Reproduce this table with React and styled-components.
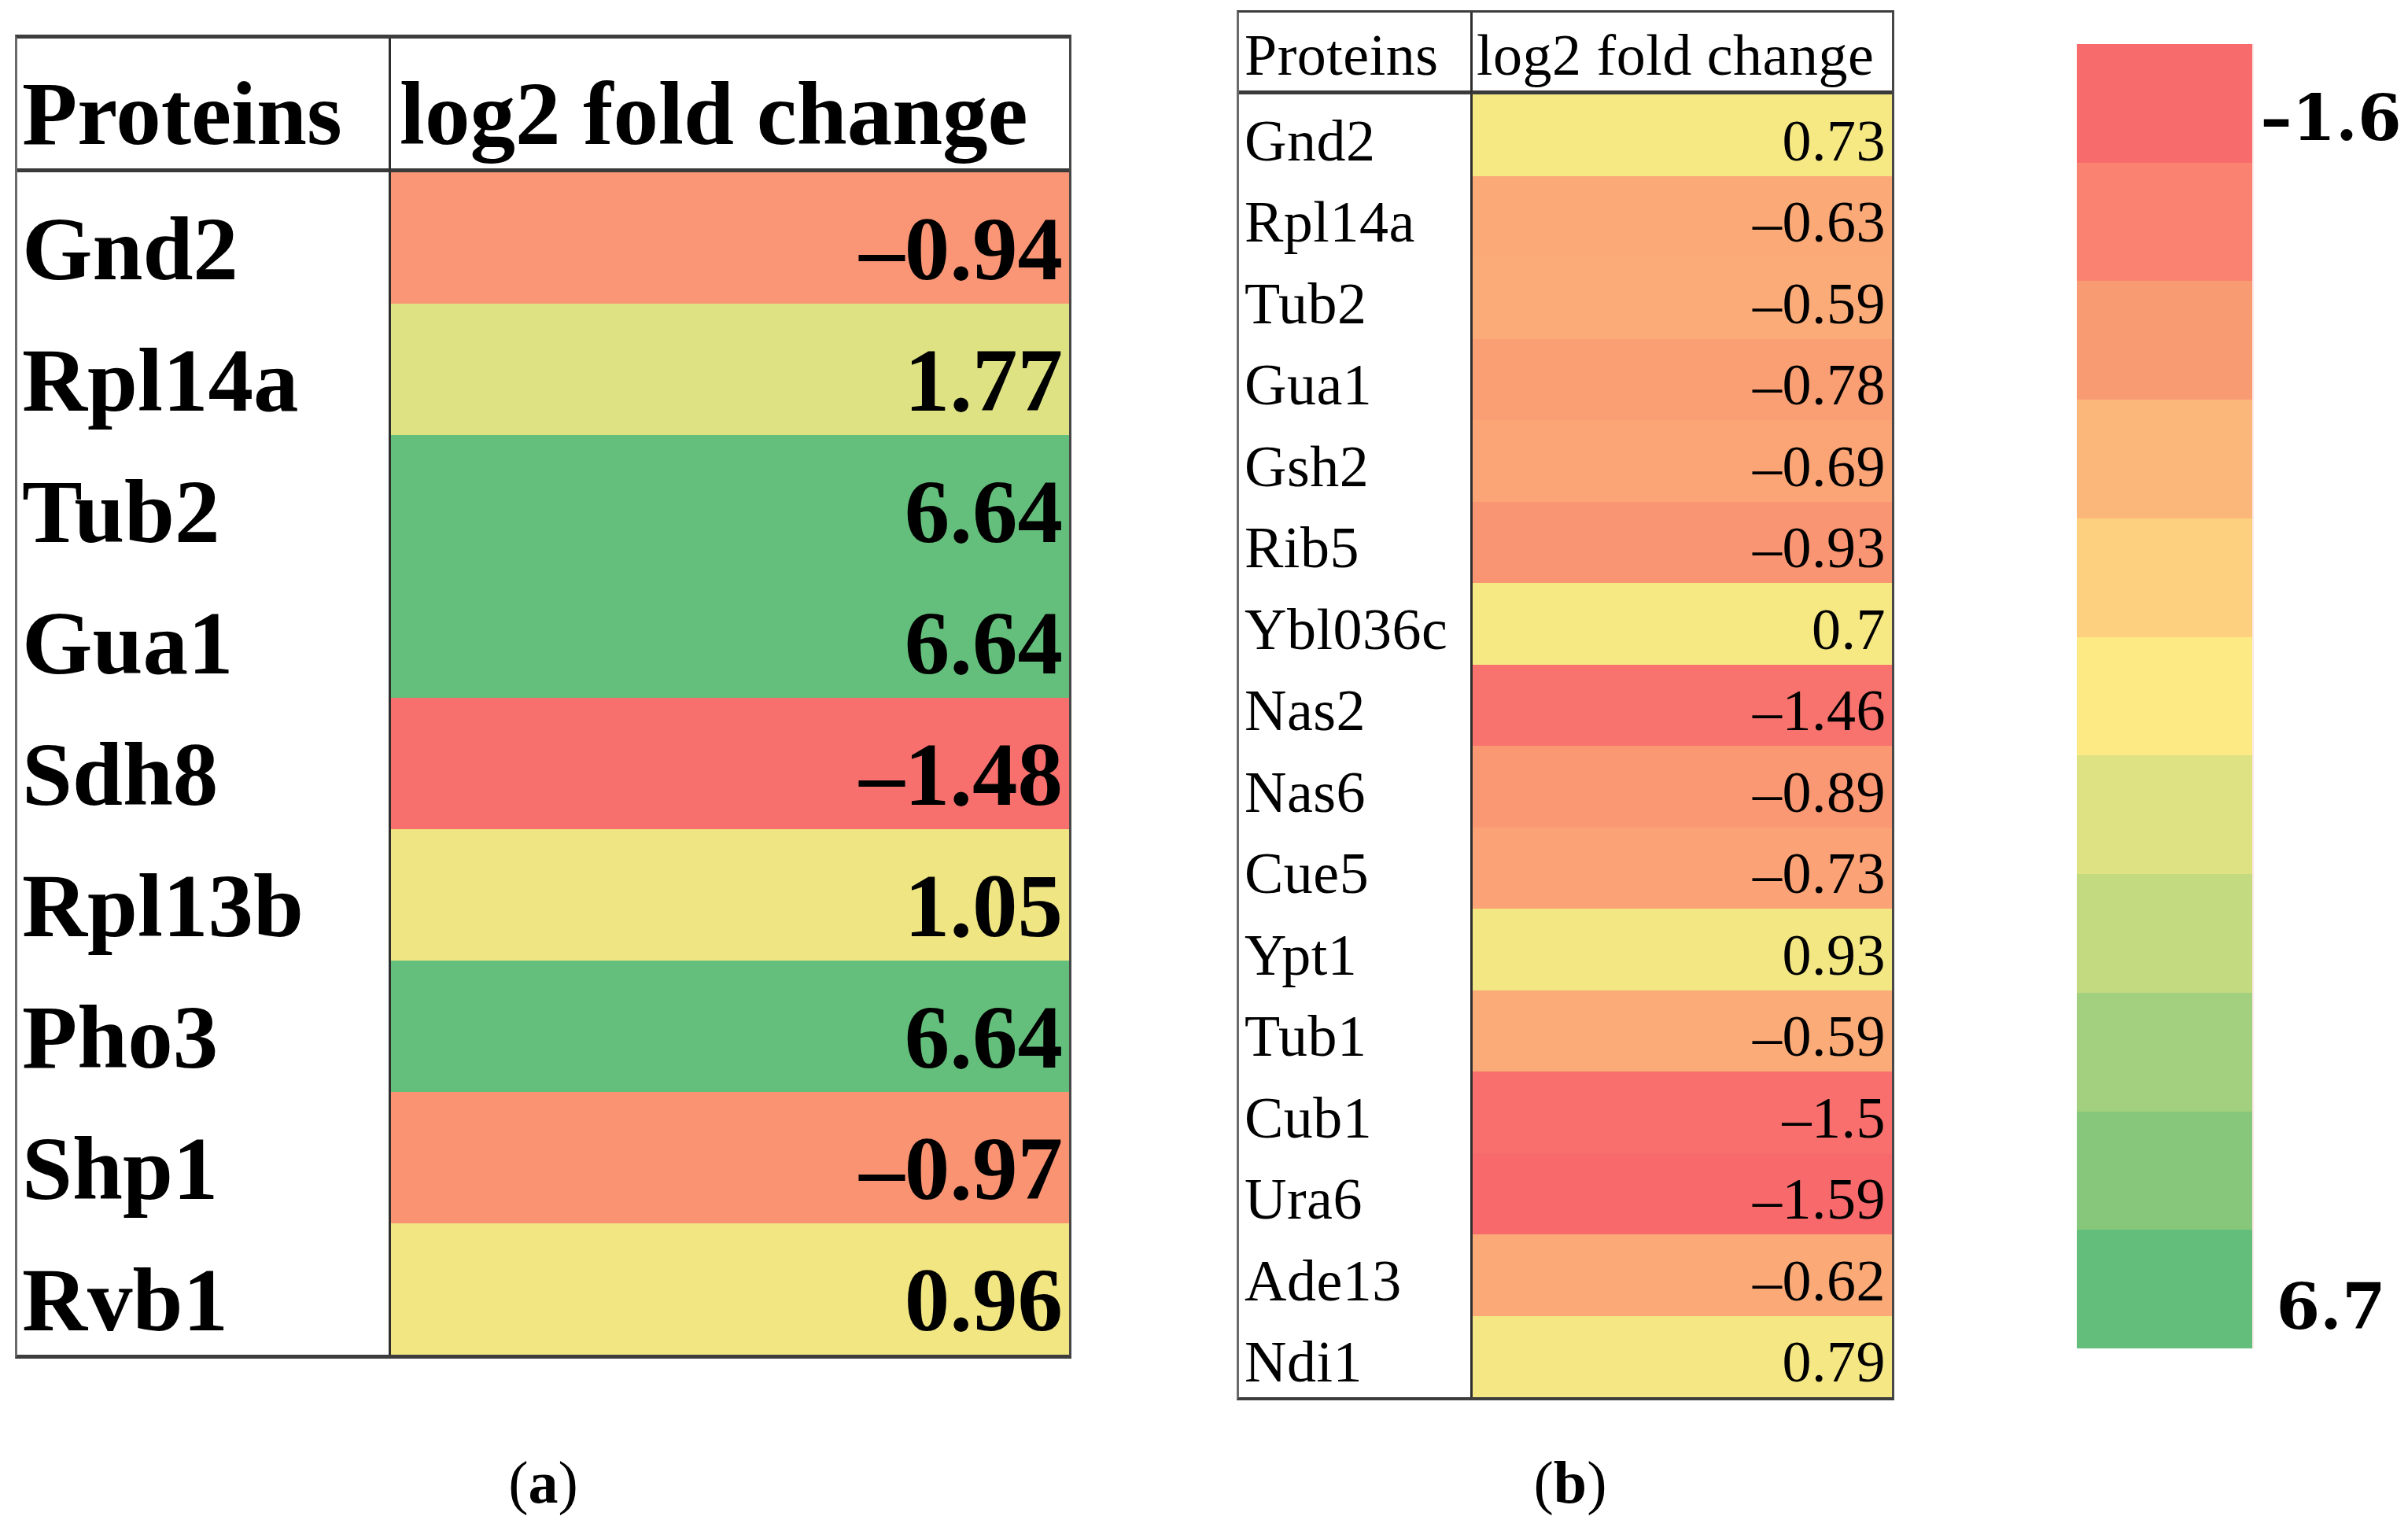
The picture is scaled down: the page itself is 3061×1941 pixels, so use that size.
import React from 'react';
import styled, { createGlobalStyle } from 'styled-components';

const GlobalStyle = createGlobalStyle`
  html, body {
    margin: 0;
    padding: 0;
    background: #ffffff;
  }
  body {
    font-family: "Liberation Serif", "Times New Roman", serif;
    color: #000;
  }
`;

const tableA = [
  { name: 'Gnd2', value: '–0.94', color: '#fa9676' },
  { name: 'Rpl14a', value: '1.77', color: '#dee283' },
  { name: 'Tub2', value: '6.64', color: '#65bf7c' },
  { name: 'Gua1', value: '6.64', color: '#65bf7c' },
  { name: 'Sdh8', value: '–1.48', color: '#f8706e' },
  { name: 'Rpl13b', value: '1.05', color: '#efe683' },
  { name: 'Pho3', value: '6.64', color: '#65bf7c' },
  { name: 'Shp1', value: '–0.97', color: '#f99372' },
  { name: 'Rvb1', value: '0.96', color: '#f2e683' },
];

const tableB = [
  { name: 'Gnd2', value: '0.73', color: '#f6e984' },
  { name: 'Rpl14a', value: '–0.63', color: '#fba977' },
  { name: 'Tub2', value: '–0.59', color: '#fbab78' },
  { name: 'Gua1', value: '–0.78', color: '#fa9e74' },
  { name: 'Gsh2', value: '–0.69', color: '#fba576' },
  { name: 'Rib5', value: '–0.93', color: '#f99572' },
  { name: 'Ybl036c', value: '0.7', color: '#f6e984' },
  { name: 'Nas2', value: '–1.46', color: '#f8736d' },
  { name: 'Nas6', value: '–0.89', color: '#f99873' },
  { name: 'Cue5', value: '–0.73', color: '#fba376' },
  { name: 'Ypt1', value: '0.93', color: '#f2e783' },
  { name: 'Tub1', value: '–0.59', color: '#fbab78' },
  { name: 'Cub1', value: '–1.5', color: '#f86f6d' },
  { name: 'Ura6', value: '–1.59', color: '#f8696b' },
  { name: 'Ade13', value: '–0.62', color: '#fbaa77' },
  { name: 'Ndi1', value: '0.79', color: '#f5e884' },
];

const scale = [
  '#f86b6c', '#f98370', '#f99b72', '#fbb67a', '#fcd07f', '#feea84',
  '#dee283', '#c3da80', '#a3d07e', '#86c77c', '#63be7b',
];

// size sets for the two tables
const sizeA = {
  font: 115, weight: 700, spacing: 0, top: 5, side: 3, rule: 5, bottom: 5,
  headH: 165, rowH: 167, nameW: 472, valueW: 862,
  padL: 6, headPadL: 11, padR: 8, padB: 12,
};

const sizeB = {
  font: 74, weight: 400, spacing: 0.5, top: 3, side: 3, rule: 5, bottom: 4,
  headH: 99, rowH: 103.5, nameW: 294, valueW: 533,
  padL: 7, headPadL: 5, padR: 8, padB: 8,
};

const Page = styled.div`
  display: flex;
  align-items: flex-start;
  width: 3061px;
  height: 1941px;
  overflow: hidden;
`;

const Panel = styled.div`
  display: flex;
  flex-direction: column;
  margin-left: ${p => p.$left}px;
  margin-top: ${p => p.$top}px;
`;

const Frame = styled.div`
  display: grid;
  grid-template-columns: ${p => p.$s.nameW}px ${p => p.$s.valueW + 3}px;
  border-top: ${p => p.$s.top}px solid #3d3d3d;
  border-bottom: ${p => p.$s.bottom}px solid #3d3d3d;
  border-left: ${p => p.$s.side}px solid #6a6a6a;
  border-right: ${p => p.$s.side}px solid #474747;
  font-size: ${p => p.$s.font}px;
  font-weight: ${p => p.$s.weight};
  letter-spacing: ${p => p.$s.spacing}px;
  line-height: 1;
`;

const Cell = styled.div`
  display: flex;
  align-items: flex-end;
  box-sizing: border-box;
  height: ${p => (p.$head ? p.$s.headH + p.$s.rule : p.$s.rowH)}px;
  padding-bottom: ${p => p.$s.padB}px;
  white-space: nowrap;
  border-bottom: ${p => (p.$head ? `${p.$s.rule}px solid #3a3a3a` : 'none')};
`;

const NameCell = styled(Cell)`
  padding-left: ${p => p.$s.padL}px;
  background: #ffffff;
`;

const ValueCell = styled(Cell)`
  justify-content: flex-end;
  padding-right: ${p => p.$s.padR}px;
  border-left: 3px solid #2e2e2e;
  background: ${p => p.$bg};
`;

const HeadValueCell = styled(Cell)`
  padding-left: ${p => p.$s.headPadL}px;
  border-left: 3px solid #2e2e2e;
  background: #ffffff;
`;

const Caption = styled.div`
  margin-top: ${p => p.$gap}px;
  padding-left: ${p => p.$shift || 0}px;
  text-align: center;
  font-family: "Liberation Serif", "Times New Roman", serif;
  font-size: 76px;
  line-height: 1;
`;

const CaptionLetter = styled.b`
  font-weight: 700;
`;

const Legend = styled.div`
  display: flex;
  margin-left: 232px;
  margin-top: 56px;
  height: 1658px;
`;

const Bar = styled.div`
  display: flex;
  flex-direction: column;
  width: 223px;
  border-right: 2px solid #fbe9e9;
`;

const Band = styled.div`
  flex: 1;
  background: ${p => p.$color};
`;

const Labels = styled.div`
  display: flex;
  flex-direction: column;
  align-items: center;
  justify-content: space-between;
  width: 196px;
  padding: 54px 0 13px;
  box-sizing: border-box;
  font-family: "DejaVu Serif", "Liberation Serif", serif;
  font-weight: 700;
  font-size: 80px;
  line-height: 1;
`;

const DataTable = ({ s, rows }) => (
  <Frame $s={s}>
    <NameCell $s={s} $head>Proteins</NameCell>
    <HeadValueCell $s={s} $head>log2 fold change</HeadValueCell>
    {rows.map(r => (
      <React.Fragment key={r.name}>
        <NameCell $s={s}>{r.name}</NameCell>
        <ValueCell $s={s} $bg={r.color}>{r.value}</ValueCell>
      </React.Fragment>
    ))}
  </Frame>
);

const App = () => (
  <>
    <GlobalStyle />
    <Page>
      <Panel $left={19} $top={44}>
        <DataTable s={sizeA} rows={tableA} />
        <Caption $gap={119}>(<CaptionLetter>a</CaptionLetter>)</Caption>
      </Panel>
      <Panel $left={210} $top={13}>
        <DataTable s={sizeB} rows={tableB} />
        <Caption $gap={66} $shift={12}>(<CaptionLetter>b</CaptionLetter>)</Caption>
      </Panel>
      <Legend>
        <Bar>
          {scale.map(c => <Band key={c} $color={c} />)}
        </Bar>
        <Labels>
          <span>–1.6</span>
          <span>6.7</span>
        </Labels>
      </Legend>
    </Page>
  </>
);

export default App;
